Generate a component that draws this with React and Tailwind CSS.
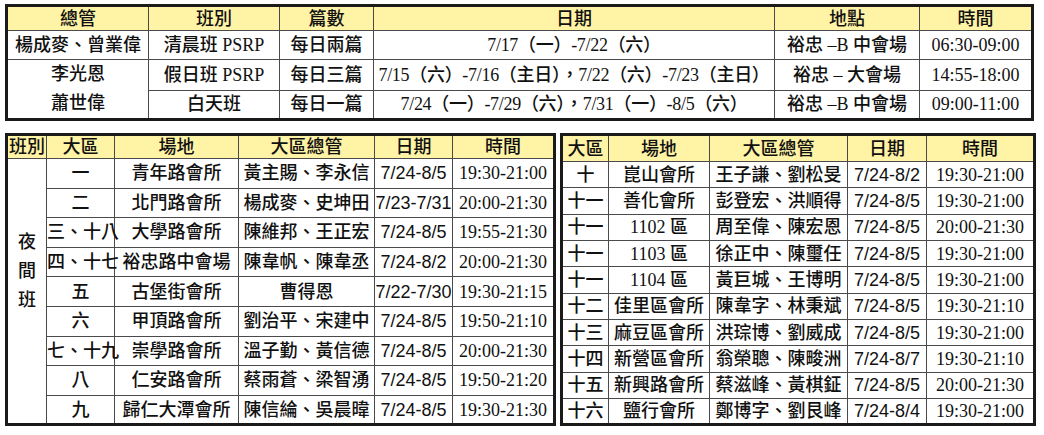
import React from 'react';

const zh = { fontFamily: '"Liberation Serif", "Noto Sans CJK TC", serif' };
const sans = { fontFamily: '"Liberation Sans", "Noto Sans CJK TC", sans-serif' };

const topRows = [
  { cls: '清晨班 PSRP', n: '每日兩篇', date: '7/17（一）-7/22（六）', place: '裕忠 –B 中會場', time: '06:30-09:00' },
  { cls: '假日班 PSRP', n: '每日三篇', date: '7/15（六）-7/16（主日），7/22（六）-7/23（主日）', place: '裕忠 – 大會場', time: '14:55-18:00' },
  { cls: '白天班', n: '每日一篇', date: '7/24（一）-7/29（六），7/31（一）-8/5（六）', place: '裕忠 –B 中會場', time: '09:00-11:00' },
];

const leftRows = [
  ['一', '青年路會所', '黃主賜、李永信', '7/24-8/5', '19:30-21:00'],
  ['二', '北門路會所', '楊成麥、史坤田', '7/23-7/31', '20:00-21:30'],
  ['三、十八', '大學路會所', '陳維邦、王正宏', '7/24-8/5', '19:55-21:30'],
  ['四、十七', '裕忠路中會場', '陳韋帆、陳韋丞', '7/24-8/2', '20:00-21:30'],
  ['五', '古堡街會所', '曹得恩', '7/22-7/30', '19:30-21:15'],
  ['六', '甲頂路會所', '劉治平、宋建中', '7/24-8/5', '19:50-21:10'],
  ['七、十九', '崇學路會所', '溫子勤、黃信德', '7/24-8/5', '20:00-21:30'],
  ['八', '仁安路會所', '蔡雨蒼、梁智湧', '7/24-8/5', '19:50-21:20'],
  ['九', '歸仁大潭會所', '陳信綸、吳晨暐', '7/24-8/5', '19:30-21:30'],
];

const rightRows = [
  ['十', '崑山會所', '王子謙、劉松旻', '7/24-8/2', '19:30-21:00'],
  ['十一', '善化會所', '彭登宏、洪順得', '7/24-8/5', '19:30-21:00'],
  ['十一', '1102 區', '周至偉、陳宏恩', '7/24-8/5', '20:00-21:30'],
  ['十一', '1103 區', '徐正中、陳璽任', '7/24-8/5', '19:30-21:00'],
  ['十一', '1104 區', '黃巨城、王博明', '7/24-8/5', '19:30-21:00'],
  ['十二', '佳里區會所', '陳韋字、林秉斌', '7/24-8/5', '19:30-21:10'],
  ['十三', '麻豆區會所', '洪琮博、劉威成', '7/24-8/5', '19:30-21:00'],
  ['十四', '新營區會所', '翁榮聰、陳畯洲', '7/24-8/7', '19:30-21:10'],
  ['十五', '新興路會所', '蔡滋峰、黃棋鉦', '7/24-8/5', '20:00-21:30'],
  ['十六', '鹽行會所', '鄭博字、劉艮峰', '7/24-8/4', '19:30-21:00'],
];

const td = 'border border-[#4a4a4a] p-0 text-center whitespace-nowrap';
const th = 'border border-[#4a4a4a] p-0 text-center whitespace-nowrap bg-[#fff3a6] font-medium';

export default function App() {
  return (
    <div className="bg-white w-[1044px] h-[435px] pt-[4px] pl-[5px] text-[18px] leading-none text-[#111] font-medium" style={zh}>
      {/* top summary */}
      <table className="border-collapse border-[3px] border-[#1a1a1a] w-[1026px] table-fixed">
        <colgroup>
          <col className="w-[142px]" />
          <col className="w-[131px]" />
          <col className="w-[94px]" />
          <col className="w-[401px]" />
          <col className="w-[145px]" />
          <col className="w-[113px]" />
        </colgroup>
        <thead>
          <tr className="h-[25px]">
            <th className={th}>總管</th>
            <th className={th}>班別</th>
            <th className={th}>篇數</th>
            <th className={th}>日期</th>
            <th className={th}>地點</th>
            <th className={th}>時間</th>
          </tr>
        </thead>
        <tbody>
          {topRows.map((r, i) => (
            <tr key={i} className={i === 1 ? 'h-[30px]' : 'h-[29px]'}>
              {i === 0 && <td className={td}>楊成麥、曾業偉</td>}
              {i === 1 && (
                <td className={td} rowSpan={2}>
                  <div className="leading-[29px]">李光恩</div>
                  <div className="leading-[29px]">蕭世偉</div>
                </td>
              )}
              <td className={td}>{r.cls}</td>
              <td className={td}>{r.n}</td>
              <td className={`${td} tracking-[-0.3px]`}>{r.date}</td>
              <td className={td}>{r.place}</td>
              <td className={td}>{r.time}</td>
            </tr>
          ))}
        </tbody>
      </table>

      <div className="flex gap-[4px] mt-[12px]">
        {/* left night-class table */}
        <table className="border-collapse border-[3px] border-[#1a1a1a] w-[548px] table-fixed">
          <colgroup>
            <col className="w-[40px]" />
            <col className="w-[68px]" />
            <col className="w-[124px]" />
            <col className="w-[136px]" />
            <col className="w-[78px]" />
            <col className="w-[102px]" />
          </colgroup>
          <thead>
            <tr className="h-[24px]">
              <th className={th}>班別</th>
              <th className={th}>大區</th>
              <th className={th}>場地</th>
              <th className={th}>大區總管</th>
              <th className={th}>日期</th>
              <th className={th}>時間</th>
            </tr>
          </thead>
          <tbody>
            {leftRows.map((r, i) => (
              <tr key={i} className="h-[29.6px]">
                {i === 0 && (
                  <td className={td} rowSpan={9}>
                    <div className="flex flex-col items-center gap-[11px] pb-[40px]">
                      <span>夜</span>
                      <span>間</span>
                      <span>班</span>
                    </div>
                  </td>
                )}
                <td className={td}>{r[0]}</td>
                <td className={td}>{r[1]}</td>
                <td className={td}>{r[2]}</td>
                <td className={td} style={sans}>{r[3]}</td>
                <td className={td}>{r[4]}</td>
              </tr>
            ))}
          </tbody>
        </table>

        {/* right table */}
        <table className="border-collapse border-[3px] border-[#1a1a1a] w-[473px] table-fixed">
          <colgroup>
            <col className="w-[47px]" />
            <col className="w-[101px]" />
            <col className="w-[138px]" />
            <col className="w-[79px]" />
            <col className="w-[108px]" />
          </colgroup>
          <thead>
            <tr className="h-[27px]">
              <th className={th}>大區</th>
              <th className={th}>場地</th>
              <th className={th}>大區總管</th>
              <th className={th}>日期</th>
              <th className={th}>時間</th>
            </tr>
          </thead>
          <tbody>
            {rightRows.map((r, i) => (
              <tr key={i} className="h-[26.3px]">
                <td className={td}>{r[0]}</td>
                <td className={td}>{r[1]}</td>
                <td className={td}>{r[2]}</td>
                <td className={td} style={sans}>{r[3]}</td>
                <td className={td}>{r[4]}</td>
              </tr>
            ))}
          </tbody>
        </table>
      </div>
    </div>
  );
}
